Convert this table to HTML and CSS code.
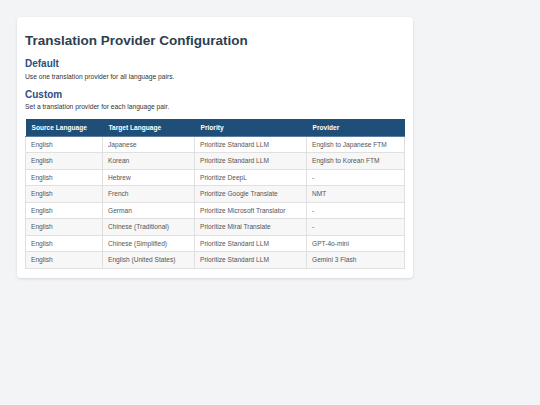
FILE: index.html
```html
<!DOCTYPE html>
<html lang="en">
  <head>
    <meta charset="UTF-8" />
    <title>Translation Provider Configuration</title>
    <link rel="stylesheet" href="styles.css">
  </head>
  <body>
    <div class="card">
      <h1>Translation Provider Configuration</h1>
      <h2>Default</h2>
      <p>Use one translation provider for all language pairs.</p>
      <h2>Custom</h2>
      <p>Set a translation provider for each language pair.</p>
      <table>
        <thead>
          <tr>
            <th class="c-src">Source Language</th>
            <th class="c-tgt">Target Language</th>
            <th class="c-pri">Priority</th>
            <th>Provider</th>
          </tr>
        </thead>
        <tbody>
          <tr><td>English</td><td>Japanese</td><td>Prioritize Standard LLM</td><td>English to Japanese FTM</td></tr>
          <tr><td>English</td><td>Korean</td><td>Prioritize Standard LLM</td><td>English to Korean FTM</td></tr>
          <tr><td>English</td><td>Hebrew</td><td>Prioritize DeepL</td><td>-</td></tr>
          <tr><td>English</td><td>French</td><td>Prioritize Google Translate</td><td>NMT</td></tr>
          <tr><td>English</td><td>German</td><td>Prioritize Microsoft Translator</td><td>-</td></tr>
          <tr><td>English</td><td>Chinese (Traditional)</td><td>Prioritize Mirai Translate</td><td>-</td></tr>
          <tr><td>English</td><td>Chinese (Simplified)</td><td>Prioritize Standard LLM</td><td>GPT-4o-mini</td></tr>
          <tr><td>English</td><td>English (United States)</td><td>Prioritize Standard LLM</td><td>Gemini 3 Flash</td></tr>
        </tbody>
      </table>
    </div>
  </body>
</html>
```

FILE: styles.css
```css
* {
  box-sizing: border-box;
  margin: 0;
  padding: 0;
}
body {
  font-family: "Liberation Sans", Arial, sans-serif;
  background: #f3f4f6;
  color: #333;
  padding: 17px;
}
.card {
  width: 396px;
  background: white;
  border-radius: 4px;
  box-shadow: 0 1px 3px rgba(0, 0, 0, 0.12);
  padding: 16px 8px 9px;
}
h1 {
  font-size: 13.5px;
  line-height: 16px;
  color: #2c3e50;
  margin-bottom: 9px;
}
h2 {
  font-size: 10px;
  line-height: 12px;
  color: #2a5082;
  margin-bottom: 1.5px;
}
p {
  font-size: 6.7px;
  line-height: 9px;
  color: #333;
  margin-bottom: 8px;
}
table {
  width: 380px;
  border-collapse: collapse;
  margin-top: 1px;
  font-size: 6.6px;
}
th {
  background: #1f4e79;
  color: white;
  text-align: left;
  font-weight: bold;
  height: 17px;
  padding: 0 6px;
  border-bottom: 1px solid #5a7fa3;
}
td {
  height: 16.5px;
  padding: 0 5px;
  border: 1px solid #e0e0e0;
  color: #555;
}
tbody tr:nth-child(even) td {
  background: #f7f7f7;
}
.c-src {
  width: 77px;
}
.c-tgt {
  width: 92px;
}
.c-pri {
  width: 112px;
}
```
